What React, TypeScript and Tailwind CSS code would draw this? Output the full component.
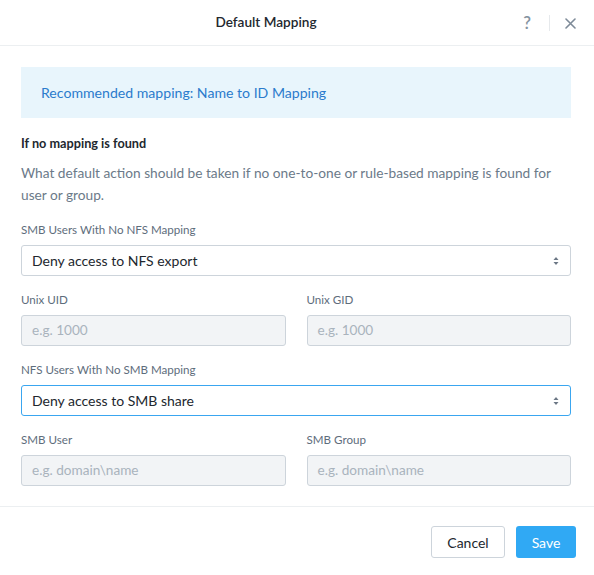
import React from "react";

const Chevrons = () => (
  <svg width="6" height="10" viewBox="0 0 6 10" className="text-[#6b7785]">
    <path d="M3 1 L5.5 4 H0.5 Z" fill="currentColor" />
    <path d="M3 9 L5.5 6 H0.5 Z" fill="currentColor" />
  </svg>
);

function Select({ value, focused }: { value: string; focused?: boolean }) {
  return (
    <div
      className={
        "flex h-[31px] items-center justify-between rounded-[3px] border bg-white pl-[10px] pr-[11px] text-[14px] text-[#22272e] " +
        (focused ? "border-[#3aa6f0]" : "border-[#cdd4db]")
      }
    >
      <span>{value}</span>
      <Chevrons />
    </div>
  );
}

function Field({ label, placeholder }: { label: string; placeholder: string }) {
  return (
    <div className="flex flex-col">
      <div className="mb-[8px] text-[11.6px] leading-[14px] text-[#5e6d7c]">{label}</div>
      <div className="flex h-[31px] items-center rounded-[3px] border border-[#cdd4db] bg-[#f2f4f6] px-[10px] text-[13.6px] text-[#a9b3bd]">
        {placeholder}
      </div>
    </div>
  );
}

export default function App() {
  return (
    <div className="h-[575px] w-[594px] bg-white font-['Lato',sans-serif] text-[#22272e]">
      <div className="relative flex h-[46px] items-center justify-center border-b border-[#eceff1] pr-[62px]">
        <div className="text-[13.6px] font-semibold">Default Mapping</div>
        <div className="absolute right-0 top-0 flex h-[46px] items-center">
          <span className="w-[20px] text-center text-[17px] font-semibold text-[#8593a1]">?</span>
          <div className="ml-[12px] mr-[15px] h-[16px] w-px bg-[#e6e9ec]" />
          <svg width="11" height="11" viewBox="0 0 11 11" className="mr-[18px]">
            <path d="M1 1 L10 10 M10 1 L1 10" stroke="#7d8a98" strokeWidth="1.6" strokeLinecap="round" />
          </svg>
        </div>
      </div>

      <div className="pl-[21px] pr-[23px] pt-[21px]">
        <div className="flex h-[51px] items-center bg-[#e8f5fc] px-[20px] text-[14.1px] text-[#2b7bcc]">
          Recommended mapping: Name to ID Mapping
        </div>

        <div className="mt-[17px] text-[12.7px] font-bold leading-[16px]">If no mapping is found</div>
        <div className="mt-[11px] text-[13.7px] leading-[22px] text-[#6b7a89]">
          What default action should be taken if no one-to-one or rule-based mapping is found for user or group.
        </div>

        <div className="mt-[17px] mb-[8px] text-[11.6px] leading-[14px] text-[#5e6d7c]">SMB Users With No NFS Mapping</div>
        <Select value="Deny access to NFS export" />

        <div className="mt-[17px] grid grid-cols-2 gap-[21px]">
          <Field label="Unix UID" placeholder="e.g. 1000" />
          <Field label="Unix GID" placeholder="e.g. 1000" />
        </div>

        <div className="mt-[17px] mb-[8px] text-[11.6px] leading-[14px] text-[#5e6d7c]">NFS Users With No SMB Mapping</div>
        <Select value="Deny access to SMB share" focused />

        <div className="mt-[17px] grid grid-cols-2 gap-[21px]">
          <Field label="SMB User" placeholder="e.g. domain\name" />
          <Field label="SMB Group" placeholder="e.g. domain\name" />
        </div>
      </div>

      <div className="mt-[20px] flex justify-end gap-[11px] border-t border-[#eceff1] pr-[18px] pt-[19px]">
        <button className="h-[32px] w-[74px] rounded-[3px] border border-[#cdd4db] bg-white text-[14px] text-[#22272e]">
          Cancel
        </button>
        <button className="h-[32px] w-[60px] rounded-[3px] bg-[#30a9f4] text-[14px] text-white">Save</button>
      </div>
    </div>
  );
}
